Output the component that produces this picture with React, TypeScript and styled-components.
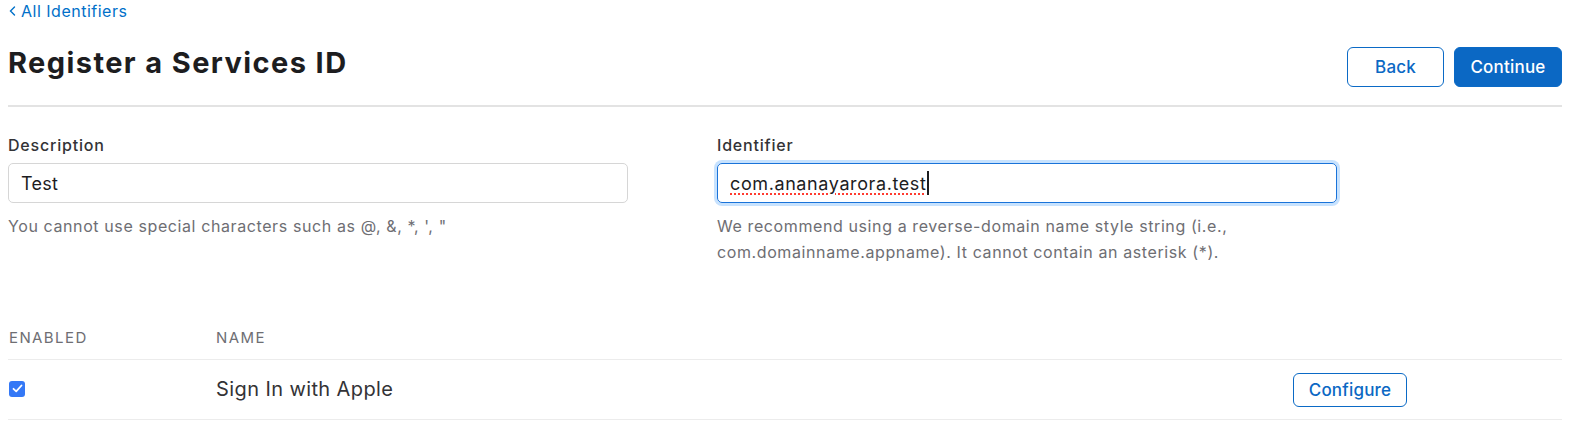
import styled, { createGlobalStyle } from "styled-components";

const GlobalStyle = createGlobalStyle`
	* { box-sizing: border-box; }
	body {
		margin: 0;
		background: #fff;
		font-family: Inter, "Liberation Sans", Arial, sans-serif;
		color: #1d1d1f;
		-webkit-font-smoothing: antialiased;
	}
`;

const Page = styled.div`
	padding: 0 8px;
	width: 1570px;
`;

const BackLink = styled.a`
	display: inline-flex;
	align-items: center;
	gap: 5px;
	height: 18px;
	font-size: 16px;
	line-height: 18px;
	letter-spacing: 0.5px;
	color: #0070c9;
	text-decoration: none;
	padding-left: 1px;
`;

const Header = styled.div`
	display: flex;
	justify-content: space-between;
	align-items: flex-start;
	padding-top: 24px;
	padding-bottom: 18px;
	border-bottom: 2px solid #e3e3e3;
`;

const Title = styled.h1`
	margin: 0;
	font-size: 29px;
	line-height: 34px;
	font-weight: 700;
	letter-spacing: 1.4px;
	color: #1d1d1f;
	padding-top: 2px;
`;

const Actions = styled.div`
	display: flex;
	gap: 10px;
	padding-top: 3px;
`;

const Button = styled.button<{ $primary?: boolean; $w: number; $h?: number; $fs?: number }>`
	width: ${({ $w }) => $w}px;
	height: ${({ $h }) => $h ?? 40}px;
	border-radius: 6px;
	border: 1px solid #0b6ac6;
	background: ${({ $primary }) => ($primary ? "#0b68c4" : "#fff")};
	color: ${({ $primary }) => ($primary ? "#fff" : "#0b68c4")};
	font-family: inherit;
	font-size: ${({ $fs }) => $fs ?? 17}px;
	font-weight: 500;
	letter-spacing: 0.2px;
	padding: 0;
	cursor: pointer;
`;

const Fields = styled.div`
	display: grid;
	grid-template-columns: 709px 1fr;
	padding-top: 28px;
`;

const Field = styled.div`
	display: flex;
	flex-direction: column;
`;

const Label = styled.label`
	font-size: 16px;
	line-height: 20px;
	font-weight: 500;
	letter-spacing: 0.8px;
	color: #333336;
	margin-bottom: 8px;
`;

const InputBox = styled.div<{ $focused?: boolean }>`
	width: 620px;
	height: 40px;
	border-radius: 5px;
	border: 1px solid ${({ $focused }) => ($focused ? "#1a73d9" : "#d6d6d6")};
	box-shadow: ${({ $focused }) => ($focused ? "0 0 0 3px rgba(0, 125, 250, 0.22)" : "none")};
	display: flex;
	align-items: center;
	padding: 0 12px;
	font-size: 18px;
	letter-spacing: ${({ $focused }) => ($focused ? "0.6px" : "0.3px")};
	color: #1d1d1f;
`;

const Misspelled = styled.span`
	text-decoration: underline dotted #ff3b30;
	text-decoration-thickness: 2px;
	text-underline-offset: 4px;
`;

const Caret = styled.span`
	display: inline-block;
	width: 1.5px;
	height: 24px;
	background: #1d1d1f;
	margin-left: 1px;
`;

const Help = styled.p`
	margin: 10px 0 0;
	font-size: 16px;
	line-height: 26px;
	letter-spacing: 0.6px;
	color: #6e6e73;
	max-width: 580px;
`;

const Table = styled.div`
	margin-top: 53px;
`;

const Row = styled.div<{ $head?: boolean }>`
	display: grid;
	grid-template-columns: 207px 1077px 1fr;
	align-items: center;
	height: ${({ $head }) => ($head ? 42 : 60)}px;
	border-bottom: 1px solid #ececec;
	padding-left: 1px;
`;

const HeadCell = styled.div`
	font-size: 15px;
	letter-spacing: 1.4px;
	color: #6e6e73;
	text-transform: uppercase;
	padding-bottom: 3px;
`;

const NameCell = styled.div`
	font-size: 20px;
	letter-spacing: 0.4px;
	color: #333336;
	padding-bottom: 2px;
`;

const Check = styled.span`
	width: 16px;
	height: 16px;
	border-radius: 3px;
	background: #3478f6;
	display: inline-flex;
	align-items: center;
	justify-content: center;
	vertical-align: top;
`;

const CheckCell = styled.div`
	display: flex;
	align-items: center;
	padding-bottom: 2px;
`;

export default function App() {
	return (
		<Page>
			<GlobalStyle />
			<BackLink href="#">
				<svg width="7" height="10" viewBox="0 0 7 10">
					<path d="M5.5 1 L1.5 5 L5.5 9" fill="none" stroke="#0070c9" strokeWidth="1.4" strokeLinecap="round" />
				</svg>
				All Identifiers
			</BackLink>
			<Header>
				<Title>Register a Services ID</Title>
				<Actions>
					<Button $w={97}>Back</Button>
					<Button $primary $w={108}>Continue</Button>
				</Actions>
			</Header>
			<Fields>
				<Field>
					<Label>Description</Label>
					<InputBox>Test</InputBox>
					<Help>You cannot use special characters such as @, &amp;, *, ', "</Help>
				</Field>
				<Field>
					<Label>Identifier</Label>
					<InputBox $focused>
						<Misspelled>com.ananayarora.test</Misspelled>
						<Caret />
					</InputBox>
					<Help>
						We recommend using a reverse-domain name style string (i.e.,
						com.domainname.appname). It cannot contain an asterisk (*).
					</Help>
				</Field>
			</Fields>
			<Table>
				<Row $head>
					<HeadCell>Enabled</HeadCell>
					<HeadCell>Name</HeadCell>
					<div />
				</Row>
				<Row>
					<CheckCell>
						<Check>
							<svg width="11" height="9" viewBox="0 0 11 9">
								<path d="M1.5 4.8 L4.2 7.3 L9.5 1.5" fill="none" stroke="#fff" strokeWidth="1.8" strokeLinecap="round" strokeLinejoin="round" />
							</svg>
						</Check>
					</CheckCell>
					<NameCell>Sign In with Apple</NameCell>
					<div>
						<Button $w={114} $h={34} $fs={17}>Configure</Button>
					</div>
				</Row>
			</Table>
		</Page>
	);
}
